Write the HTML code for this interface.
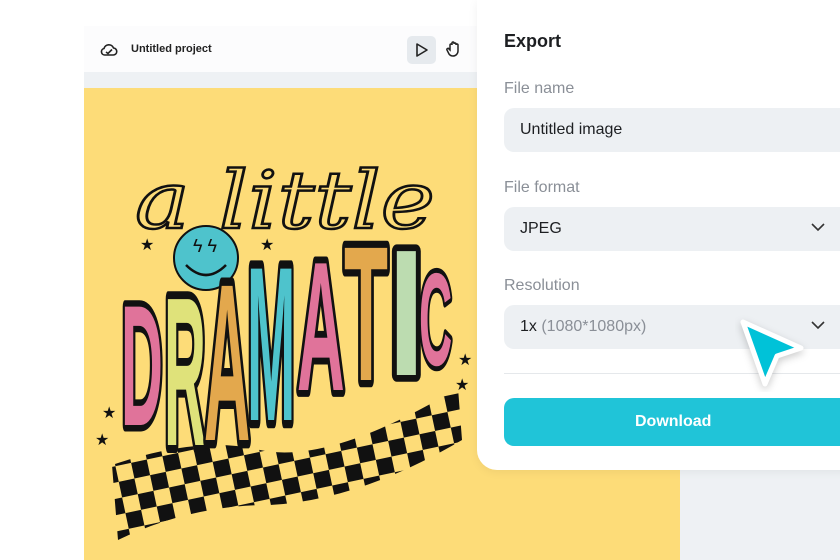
<!DOCTYPE html>
<html><head><style>
*{margin:0;padding:0;box-sizing:border-box}
body{width:840px;height:560px;overflow:hidden;background:#fff;font-family:"Liberation Sans",sans-serif;position:relative}
.hdr{position:absolute;left:84px;top:26px;width:400px;height:46px;background:#fcfcfd}
.strip{position:absolute;left:84px;top:72px;width:756px;height:16px;background:#eef1f4}
.canvas{position:absolute;left:84px;top:88px;width:596px;height:472px;background:#fddc78}
.gray{position:absolute;left:680px;top:88px;width:160px;height:472px;background:#eef1f4}
.panel{position:absolute;left:477px;top:0;width:380px;height:470px;background:#fff;border-bottom-left-radius:20px;box-shadow:0 2px 10px rgba(0,0,0,.06)}
.lbl{position:absolute;left:27px;font-size:16px;color:#8a8f97}
.box{position:absolute;left:27px;width:360px;height:44px;background:#edf0f3;border-radius:10px;font-size:16px;color:#1d1f22;padding:13px 0 0 16px}
.chev{position:absolute;left:306px;top:15px}
</style></head><body>
<div class="hdr">
<svg style="position:absolute;left:16px;top:16px" width="18" height="16" viewBox="0 0 18 16"><path d="M5 13h8a3.5 3.5 0 0 0 .5-7A5 5 0 0 0 4 6.5 3.3 3.3 0 0 0 5 13z M6 10l2 1.5 4-4" fill="none" stroke="#222" stroke-width="1.6"/></svg>
<div style="position:absolute;left:47px;top:17px;font-size:11px;font-weight:bold;color:#222">Untitled project</div>
<div style="position:absolute;left:323px;top:10px;width:29px;height:28px;background:#e6eaee;border-radius:5px"></div>
<svg style="position:absolute;left:331px;top:16px" width="14" height="16" viewBox="0 0 14 16"><path d="M2 2l10 6-10 6z" fill="none" stroke="#222" stroke-width="1.6" stroke-linejoin="round"/></svg>
<svg style="position:absolute;left:362px;top:14px" width="16" height="18" viewBox="0 0 16 18"><path d="M4 10V5a1 1 0 0 1 2 0V3a1 1 0 0 1 2 0v1a1 1 0 0 1 2 0v1a1 1 0 0 1 2 0v6a5 5 0 0 1-5 5 5 5 0 0 1-4-2L1 10a1 1 0 0 1 2-1z" fill="none" stroke="#222" stroke-width="1.5"/></svg>
</div>
<div class="strip"></div>
<div class="canvas"></div>
<div class="gray"></div>
<svg style="position:absolute;left:0;top:0" width="480" height="560">
<defs><pattern id="ck" width="32" height="32" patternUnits="userSpaceOnUse" patternTransform="rotate(-12)"><rect width="16" height="16" fill="#111"/><rect x="16" y="16" width="16" height="16" fill="#111"/></pattern></defs>
<path d="M112 465 Q200 435 260 450 Q330 465 458 388 L462 440 Q360 500 270 505 Q190 505 118 540 Z" fill="url(#ck)"/>
<text x="135" y="228" font-family="DejaVu Serif,serif" font-style="italic" font-size="80" textLength="300" lengthAdjust="spacingAndGlyphs" fill="none" stroke="#111" stroke-width="2.5">a little</text>
<circle cx="206" cy="258" r="32" fill="#4ec3cc" stroke="#111" stroke-width="2"/>
<path d="M186 265q20 20 40 0" fill="none" stroke="#111" stroke-width="2.5"/>
<text x="193" y="252" font-size="18" fill="#111">ϟ ϟ</text>
<g font-family="Liberation Sans,sans-serif" font-weight="bold" stroke="#111" stroke-width="3" paint-order="stroke" stroke-linejoin="round">
<text transform="translate(121,425) scale(1.45,4.3)" font-size="40" fill="#e0739a">D</text>
<text transform="translate(164,445) scale(1.45,5.3)" font-size="40" fill="#dfe27a">R</text>
<text transform="translate(204,440) scale(1.6,5.6)" font-size="40" fill="#e3a84d">A</text>
<text transform="translate(247,420) scale(1.45,5.5)" font-size="40" fill="#4ec3cc">M</text>
<text transform="translate(297,390) scale(1.65,4.6)" font-size="40" fill="#e0739a">A</text>
<text transform="translate(344,380) scale(1.8,4.8)" font-size="40" fill="#e3a84d">T</text>
<text transform="translate(388,375) scale(3.3,4.5)" font-size="40" fill="#bcdcb0">I</text>
<text transform="translate(419,365) scale(1.15,3.3)" font-size="40" fill="#e0739a">C</text>
</g>
<g fill="#111" font-size="16"><text x="140" y="250">★</text><text x="260" y="250">★</text><text x="455" y="390">★</text><text x="95" y="445">★</text><text x="102" y="418">★</text><text x="458" y="365">★</text></g>
</svg>
<div class="panel">
<div style="position:absolute;left:27px;top:31px;font-size:18px;font-weight:bold;color:#1d1f22">Export</div>
<div class="lbl" style="top:80px">File name</div>
<div class="box" style="top:108px">Untitled image</div>
<div class="lbl" style="top:179px">File format</div>
<div class="box" style="top:207px">JPEG<svg class="chev" width="16" height="10"><path d="M2 2l6 6 6-6" fill="none" stroke="#333" stroke-width="1.6"/></svg></div>
<div class="lbl" style="top:277px">Resolution</div>
<div class="box" style="top:305px">1x <span style="color:#8a8f97">(1080*1080px)</span><svg class="chev" width="16" height="10"><path d="M2 2l6 6 6-6" fill="none" stroke="#333" stroke-width="1.6"/></svg></div>
<div style="position:absolute;left:27px;top:373px;width:360px;height:1px;background:#e5e8eb"></div>
<div style="position:absolute;left:27px;top:398px;width:360px;height:48px;background:#20c4d8;border-radius:10px;color:#fff;font-weight:bold;font-size:16px;padding:15px 0 0 131px">Download</div>
</div>
<svg style="position:absolute;left:735px;top:312px" width="75" height="80"><path d="M8 10l58 26-24 8-12 28z" fill="#00c2d8" stroke="#fff" stroke-width="5" stroke-linejoin="round" style="filter:drop-shadow(0 3px 4px rgba(0,0,0,.2))"/></svg>
</body></html>
